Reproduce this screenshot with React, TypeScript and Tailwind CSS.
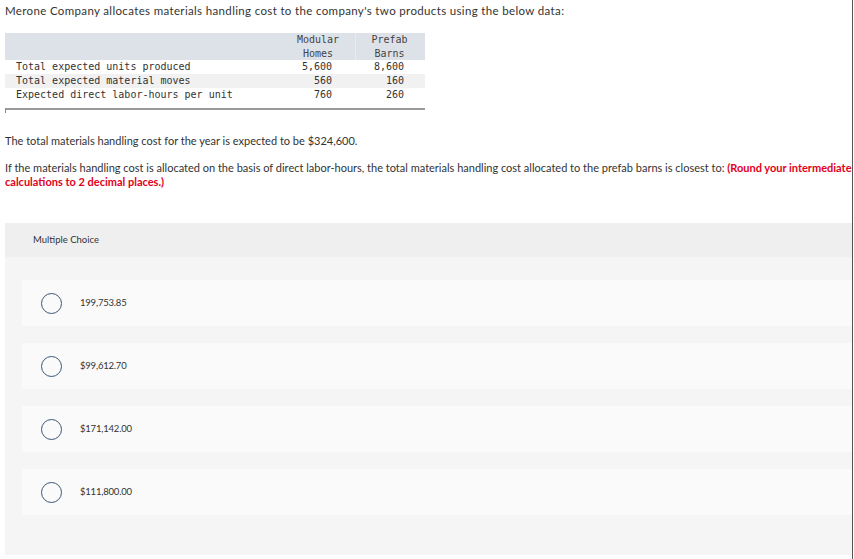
import { useState } from 'react'

const rows = [
    { label: 'Total expected units produced', modular: '5,600', prefab: '8,600' },
    { label: 'Total expected material moves', modular: '560', prefab: '160' },
    { label: 'Expected direct labor-hours per unit', modular: '760', prefab: '260' },
]

const choices = ['199,753.85', '$99,612.70', '$171,142.00', '$111,800.00']

export default function App() {
    const [picked, setPicked] = useState<number | null>(null)

    return (
        <div className="relative w-[854px] h-[559px] overflow-hidden bg-white text-[#333] font-['Lato',sans-serif]">
            <div className="w-[862px] pl-[5px]">
                <p className="pt-[3px] text-[11.5px] tracking-[0.35px] leading-[15px]">
                    Merone Company allocates materials handling cost to the company's two products using the below data:
                </p>

                {/* data table */}
                <div className="mt-[15px] w-[420px] font-['DejaVu_Sans_Mono',monospace] text-[10px] leading-[13.5px]">
                    <table className="w-full border-collapse table-fixed">
                        <thead>
                            <tr className="bg-[#dde1e8] text-[#444]">
                                <th className="w-[265px]"></th>
                                <th className="w-[85px] font-normal">
                                    <div className="text-center w-[60px] ml-[18px]">Modular<br />Homes</div>
                                </th>
                                <th className="font-normal border-l border-[#e8ebef]">
                                    <div className="text-center w-[50px] ml-[9px]">Prefab<br />Barns</div>
                                </th>
                            </tr>
                        </thead>
                        <tbody>
                            {rows.map((r, i) => (
                                <tr key={r.label} className={i === 1 ? 'bg-[#f1f1f1]' : 'bg-white'}>
                                    <td className="pl-[11px] h-[14px] whitespace-nowrap">{r.label}</td>
                                    <td className="text-right pr-[23px]">{r.modular}</td>
                                    <td className="text-right pr-[21px]">{r.prefab}</td>
                                </tr>
                            ))}
                        </tbody>
                    </table>
                    <div className="mt-[6px] h-[5px] border-t-2 border-l border-[#9a9a9a] border-l-[#8a8a8a]"></div>
                </div>

                <p className="mt-[21px] text-[11px] leading-[14px]">
                    The total materials handling cost for the year is expected to be $324,600.
                </p>
                <p className="mt-[13px] text-[11px] leading-[14px] pr-[2px]">
                    If the materials handling cost is allocated on the basis of direct labor-hours, the total materials handling cost allocated to the prefab barns is closest to:{' '}
                    <span className="font-bold text-[#e2001a]">(Round your intermediate calculations to 2 decimal places.)</span>
                </p>
            </div>

            {/* multiple choice panel */}
            <div className="absolute left-[5px] top-[223px] w-[847px] h-[332px] bg-[#f5f5f5]">
                <div className="h-[34px] bg-[#efefef] pl-[28px] flex items-center text-[9.5px] text-[#333]">
                    Multiple Choice
                </div>
                <div className="pl-[17px] pt-[23px] flex flex-col gap-[17px]">
                    {choices.map((c, i) => (
                        <button
                            key={c}
                            type="button"
                            onClick={() => setPicked(i)}
                            className="h-[46px] bg-[#fafafa] flex items-center text-left"
                        >
                            <span className="ml-[19px] w-[21px] h-[21px] rounded-full border-[1.5px] border-[#3d5676] flex items-center justify-center">
                                {picked === i && <span className="w-[11px] h-[11px] rounded-full bg-[#3d5676]"></span>}
                            </span>
                            <span className="ml-[18px] text-[9.5px] tracking-[-0.2px] text-[#333]">{c}</span>
                        </button>
                    ))}
                </div>
            </div>

            {/* right edge of window */}
            <div className="absolute right-[1px] top-0 w-[1.5px] h-full bg-[#555]"></div>
        </div>
    )
}
